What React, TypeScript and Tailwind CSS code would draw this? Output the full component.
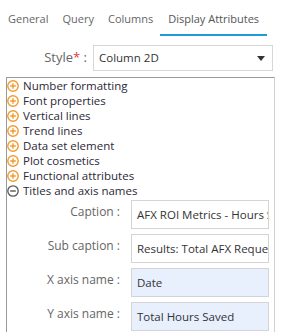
import React from "react";

const PlusIcon = () => (
  <svg width="12" height="12" viewBox="0 0 12 12" className="shrink-0 mt-[2px]">
    <circle cx="6" cy="6" r="5.2" fill="none" stroke="#f29a2e" strokeWidth="1.4" />
    <path d="M3.2 6h5.6M6 3.2v5.6" stroke="#f29a2e" strokeWidth="1.4" />
  </svg>
);

const MinusIcon = () => (
  <svg width="12" height="12" viewBox="0 0 12 12" className="shrink-0 mt-[2px]">
    <circle cx="6" cy="6" r="5.2" fill="none" stroke="#555" strokeWidth="1.3" />
    <path d="M3.2 6h5.6" stroke="#555" strokeWidth="1.4" />
  </svg>
);

const items = [
  "Number formatting",
  "Font properties",
  "Vertical lines",
  "Trend lines",
  "Data set element",
  "Plot cosmetics",
  "Functional attributes",
];

const fields: { label: string; value: string; blue: boolean }[] = [
  { label: "Caption", value: "AFX ROI Metrics - Hours Saved", blue: false },
  { label: "Sub caption", value: "Results: Total AFX Requests", blue: false },
  { label: "X axis name", value: "Date", blue: true },
  { label: "Y axis name", value: "Total Hours Saved", blue: true },
];

export default function App() {
  return (
    <div className="w-[307px] h-[332px] bg-white overflow-hidden font-['Open_Sans',sans-serif]">
      <div className="flex pl-[1px] pt-[11px] text-[11px] leading-[15px] text-[#666]">
        <div className="px-[7px] pb-[10px]">General</div>
        <div className="px-[7px] pb-[10px]">Query</div>
        <div className="px-[7px] pb-[10px]">Columns</div>
        <div className="px-[8px] pb-[8px] text-[#555] border-b-2 border-[#1e9ad6]">Display Attributes</div>
      </div>
      <div className="flex items-center mt-[9px] h-[26px]">
        <div className="w-[93px] pr-[6px] text-right text-[13px] text-[#666]">
          Style<span className="text-[#e0383b]">*</span> :
        </div>
        <div className="w-[180px] h-[26px] border border-[#d6d6d6] flex items-center justify-between pl-[5px] pr-[7px] text-[11.5px] text-[#333]">
          <span>Column 2D</span>
          <svg width="8" height="5" viewBox="0 0 8 5">
            <path d="M0 0h8L4 5z" fill="#333" />
          </svg>
        </div>
      </div>
      <div className="ml-[6px] mt-[6px] w-[269px] h-[300px] border-t border-l border-[#999] border-r border-r-[#d0d0d0] text-[11.5px] text-[#2b2838]">
        {items.map((t) => (
          <div key={t} className="flex items-start h-[15px] gap-[4px] leading-[15px] whitespace-nowrap">
            <PlusIcon />
            <span>{t}</span>
          </div>
        ))}
        <div className="flex items-start h-[15px] gap-[4px] leading-[15px] whitespace-nowrap">
          <MinusIcon />
          <span>Titles and axis names</span>
        </div>
        <div className="flex flex-col gap-[5px] mt-[2px]">
          {fields.map((f) => (
            <div key={f.label} className="flex">
              <div className="w-[114px] pr-[1px] pt-[3px] text-right text-[12px] text-[#666] whitespace-nowrap">
                {f.label} :
              </div>
              <div
                className={`ml-[10px] w-[138px] h-[29px] border border-[#d4d4d4] flex items-center pl-[5px] overflow-hidden whitespace-nowrap text-[11.5px] text-[#333] ${
                  f.blue ? "bg-[#e8f0fe]" : "bg-white"
                }`}
              >
                {f.value}
              </div>
            </div>
          ))}
        </div>
      </div>
    </div>
  );
}
